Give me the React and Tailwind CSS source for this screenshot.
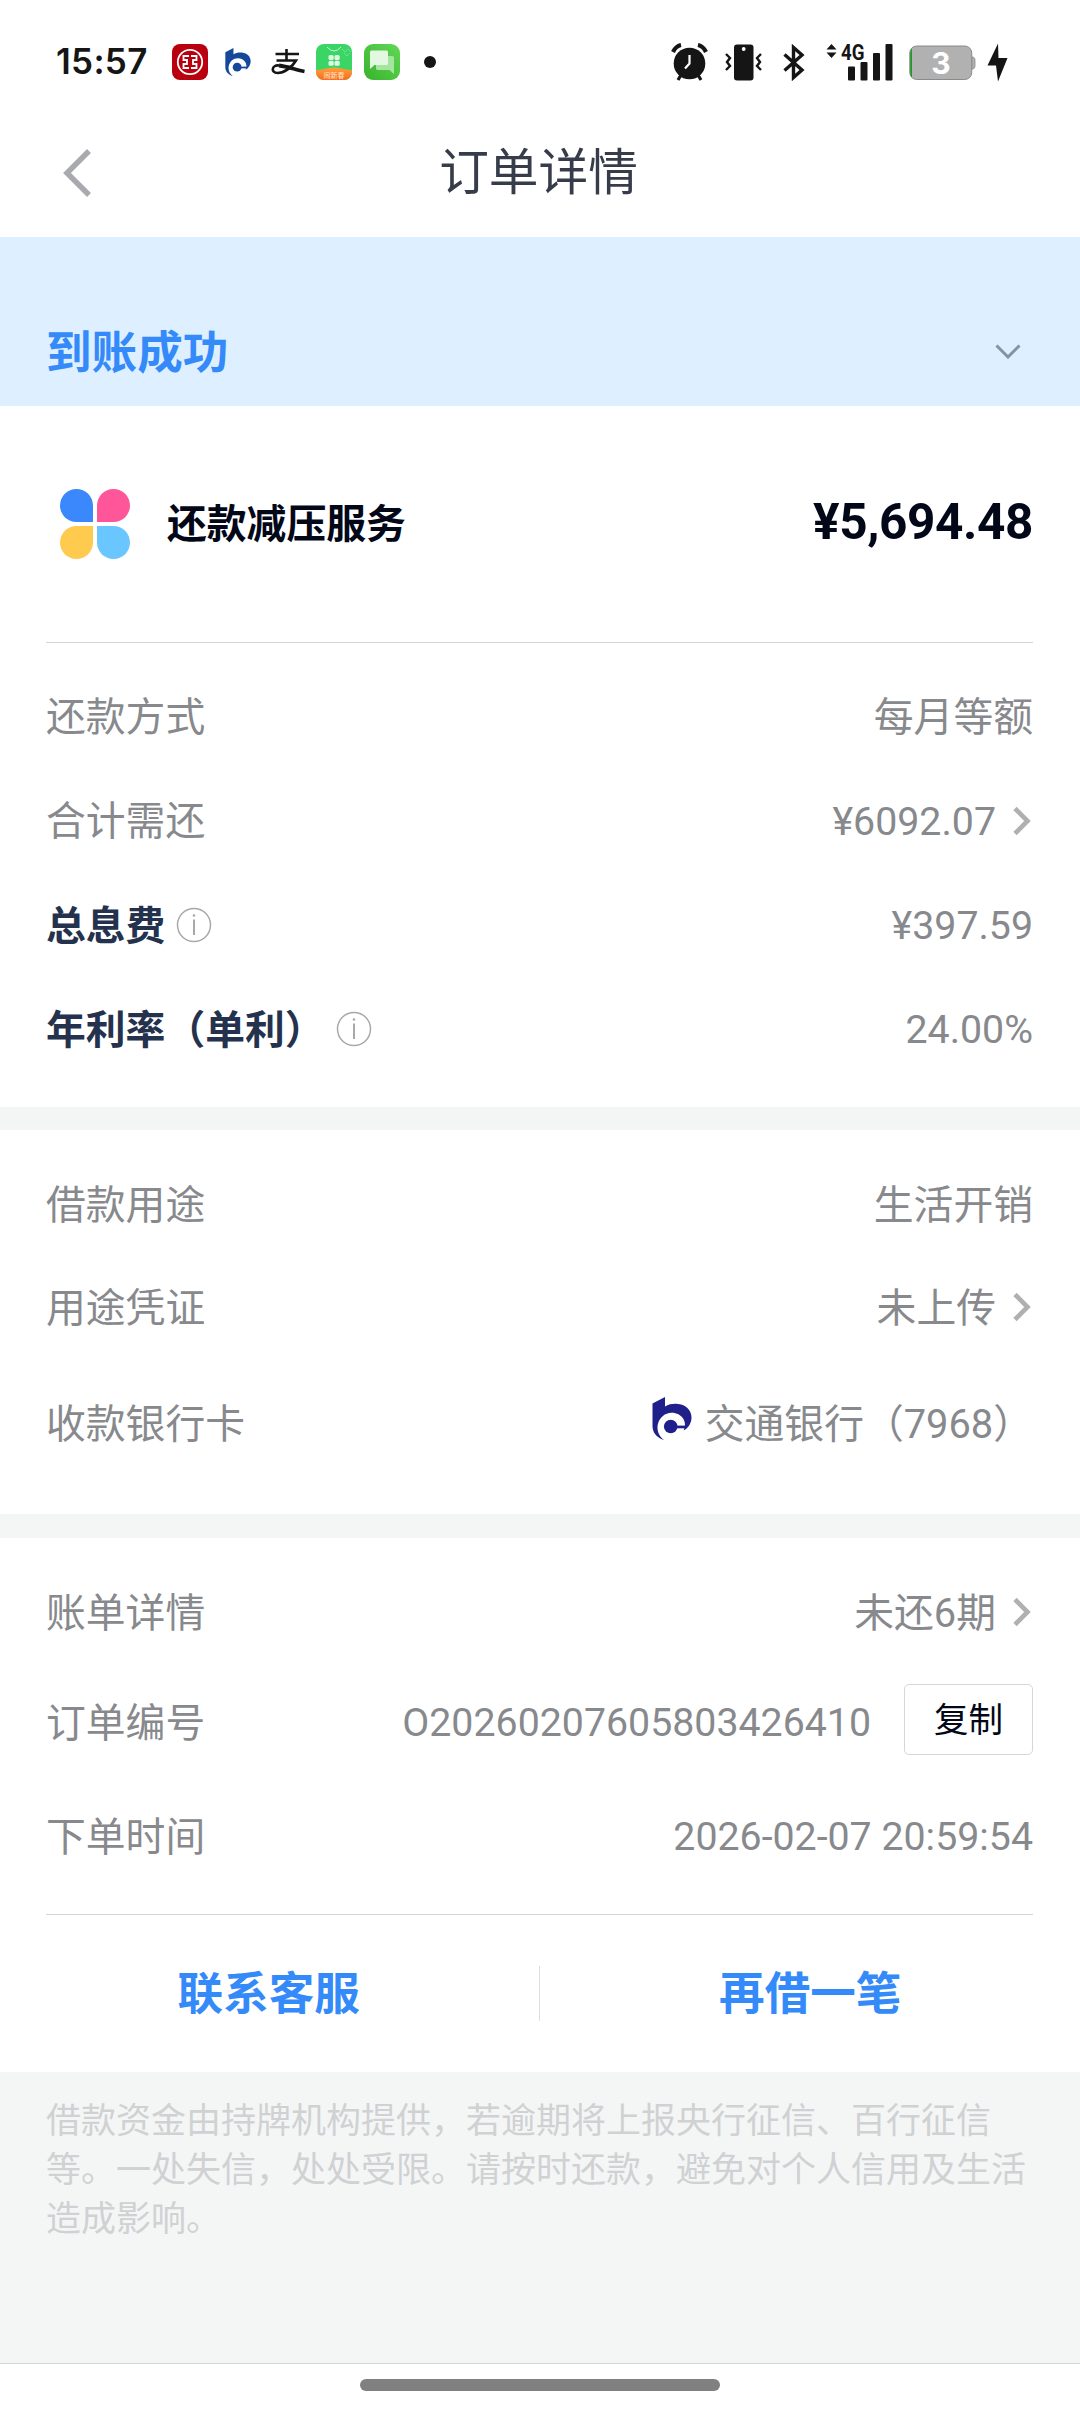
const CJK = "font-['Roboto','Noto_Sans_CJK_SC',sans-serif]";

function BankMark({ className, color }) {
  return (
    <svg className={className} viewBox="0 0 40 43" fill={color}>
      <path d="M0.500 6.500L13 0V9.500C17 7 22 6.500 26 7C35 8 39.500 14 39.500 20.500C39.500 26 36.500 31 31.500 33.500C36 25 30 15.700 19.500 15.700C6 16 0 34 12 43C4 40.500 0.500 35 0.500 29Z" />
      <circle cx="18.700" cy="29.500" r="6.800" />
      <path d="M24 28.600H34.500V31.300H24Z" />
    </svg>
  );
}

function IcbcIcon() {
  return (
    <svg className="h-9 w-9" viewBox="0 0 36 36">
      <rect width="36" height="36" rx="8" fill="#b8000f" />
      <circle cx="18" cy="18" r="12.2" fill="none" stroke="#fff" strokeWidth="1.8" />
      <path
        d="M17 12H11.500V16H15V20H11.500V24H17M19 12H24.500V16H21V20H24.500V24H19"
        fill="none"
        stroke="#fff"
        strokeWidth="1.800"
      />
    </svg>
  );
}

function ZhiIcon() {
  return (
    <svg className="h-[26px] w-[34px]" viewBox="0 0 34 26" fill="none" stroke="#151515" strokeWidth="2.6">
      <path d="M4.500 5H28M15.500 0V11.500M5.500 11.500H25C21 18.500 13 24 6.500 24C-0.500 24 0.500 15.500 8 16.500" />
      <path d="M8 16.500C17 17.500 25 21 33.500 22.500" strokeWidth="3.800" />
    </svg>
  );
}

function CloverAppIcon() {
  return (
    <svg className="h-9 w-9" viewBox="0 0 36 36">
      <defs>
        <clipPath id="clover-clip">
          <rect width="36" height="36" rx="8" />
        </clipPath>
        <linearGradient id="clover-orange" x1="0" y1="0" x2="0" y2="1">
          <stop offset="0" stopColor="#ffa13c" />
          <stop offset="1" stopColor="#fb6a1a" />
        </linearGradient>
      </defs>
      <g clipPath="url(#clover-clip)">
        <rect width="36" height="36" fill="#3ad564" />
        <path d="M11 3Q18 11 25 3" fill="none" stroke="#c9f7d5" strokeWidth="1" />
        <path d="M26 5L29 8L32 5L35 8M28 9L31 12L34 9" fill="none" stroke="#84e79d" strokeWidth="0.700" />
        <g fill="#dcf9e3">
          <rect x="12.500" y="11" width="5.200" height="5" rx="1.600" />
          <rect x="18.500" y="11" width="5.200" height="5" rx="1.600" />
          <rect x="12.500" y="16.800" width="5.200" height="5" rx="1.600" />
          <rect x="18.500" y="16.800" width="5.200" height="5" rx="1.600" />
        </g>
        <path d="M0 26Q4 26 8 25Q18 22 28 25Q32 26 36 26V36H0Z" fill="url(#clover-orange)" />
        <text x="18" y="33.5" textAnchor="middle" fontSize="7" fill="#ffe6cf" fontFamily="Noto Sans CJK SC">
          闹新春
        </text>
      </g>
    </svg>
  );
}

function MessagesIcon() {
  return (
    <svg className="h-9 w-9" viewBox="0 0 36 36">
      <defs>
        <linearGradient id="msg-green" x1="0" y1="1" x2="1" y2="0">
          <stop offset="0" stopColor="#38b22c" />
          <stop offset="1" stopColor="#62d856" />
        </linearGradient>
      </defs>
      <rect width="36" height="36" rx="9" fill="url(#msg-green)" />
      <path d="M14 12H28.5Q30 12 30 13.500V30L25.500 26H13.500Q12 26 12 24.500V14Z" fill="#a5e59f" />
      <path d="M7.500 6.500H22.500Q24 6.500 24 8V19.500Q24 21 22.500 21H10.500L6 25V8Q6 6.500 7.500 6.500Z" fill="#e3f8e0" />
    </svg>
  );
}

function AlarmIcon() {
  return (
    <svg className="h-[38px] w-[37px]" viewBox="0 0 37 38">
      <path d="M2 9Q5 3 10 2M35 9Q32 3 27 2" stroke="#151515" strokeWidth="4.200" fill="none" />
      <path d="M10 32L7 37M27 32L30 37" stroke="#151515" strokeWidth="3.200" />
      <circle cx="18.500" cy="20.500" r="15.800" fill="#151515" />
      <path d="M18.500 12V20.500L14 25.500" stroke="#fff" strokeWidth="2.200" fill="none" />
    </svg>
  );
}

function VibrateIcon() {
  return (
    <svg className="h-[37px] w-[37px]" viewBox="0 0 37 37">
      <rect x="9" y="0.500" width="19.500" height="36" rx="3" fill="#151515" />
      <circle cx="18.700" cy="5" r="1.900" fill="#fff" />
      <path
        d="M1 10L5 14L2 18L5 22L1 26M36 10L32 14L35 18L32 22L36 26"
        stroke="#151515"
        strokeWidth="2.400"
        fill="none"
      />
    </svg>
  );
}

function BluetoothIcon() {
  return (
    <svg className="h-[37px] w-[22px]" viewBox="0 0 22 37" fill="none" stroke="#151515" strokeWidth="3.400">
      <path d="M1.500 10.500L19 26L10.500 33.500V3.500L19 11L1.500 26.500" />
    </svg>
  );
}

function SignalIcon() {
  return (
    <svg className="h-[38px] w-[67px] overflow-visible" viewBox="0 0 67 38" fill="#151515">
      <path d="M0.500 6.500L5.500 1L10.500 6.500ZM0.500 9.500H10.500L5.500 15Z" />
      <text x="15" y="16.500" fontFamily="Roboto" fontWeight="700" fontSize="22" textLength="23.500" lengthAdjust="spacingAndGlyphs">
        4G
      </text>
      <rect x="22" y="23.500" width="7" height="14" rx="1" />
      <rect x="34.500" y="19" width="7" height="18.500" rx="1" />
      <rect x="47" y="10" width="7" height="27.500" rx="1" />
      <rect x="59.500" y="1" width="7" height="36.500" rx="1" />
    </svg>
  );
}

function BatteryIcon() {
  return (
    <svg className="h-[36px] w-[67px]" viewBox="0 0 67 36">
      <rect x="0.750" y="1" width="62" height="33.500" rx="7" fill="#b1b1b1" stroke="#8a8a8a" strokeWidth="1" />
      <path d="M63 12H64Q66 12.500 66 15V21Q66 23.500 64 24H63Z" fill="#b1b1b1" stroke="#8a8a8a" strokeWidth="0.800" />
      <path d="M3 3.500Q1.200 5 1.200 8V28Q1.200 31 3 32.500Z" fill="#1f9a2a" />
      <text x="32" y="29" textAnchor="middle" fontFamily="Inter" fontWeight="700" fontSize="30" fill="#fff">
        3
      </text>
    </svg>
  );
}

function StatusBar() {
  return (
    <div className="flex h-[124px] items-center pl-[56px] pr-[72px]">
      <span className="w-[92px] whitespace-nowrap pb-[1px] font-['Inter'] text-[35px] font-semibold leading-none tracking-[0.3px] text-[#151515]">
        15:57
      </span>
      <div className="ml-6 flex items-center">
        <IcbcIcon />
        <BankMark className="ml-[17px] h-[28px] w-[26px]" color="#15489b" />
        <div className="ml-[20px]">
          <ZhiIcon />
        </div>
        <div className="ml-[11px]">
          <CloverAppIcon />
        </div>
        <div className="ml-3">
          <MessagesIcon />
        </div>
        <div className="ml-6 h-3 w-3 rounded-full bg-[#151515]" />
      </div>
      <div className="ml-auto flex items-center">
        <AlarmIcon />
        <div className="ml-[17px]">
          <VibrateIcon />
        </div>
        <div className="ml-[21px]">
          <BluetoothIcon />
        </div>
        <div className="ml-[21px]">
          <SignalIcon />
        </div>
        <div className="ml-[16px] mt-[2px]">
          <BatteryIcon />
        </div>
        <svg className="ml-[11px] h-[39px] w-[21px]" viewBox="0 0 21 39" fill="#151515">
          <path d="M11 0.500L0.500 22.500H9L11 38.500L20.500 15H11.500Z" />
        </svg>
      </div>
    </div>
  );
}

function ChevronRight() {
  return (
    <svg className="ml-[17px] mr-[2px] h-[30px] w-[18px]" viewBox="0 0 18 30" fill="none" stroke="#b0b0b2" strokeWidth="4.600">
      <path d="M2 2.500L14.500 15L2 27.500" />
    </svg>
  );
}

function InfoIcon() {
  return (
    <svg className="h-[36px] w-[36px]" viewBox="0 0 36 36">
      <circle cx="18" cy="18" r="16.500" fill="none" stroke="#a9a9ab" strokeWidth="1.500" />
      <circle cx="18" cy="8.500" r="1.300" fill="#a9a9ab" />
      <path d="M18 12.500V28" stroke="#a9a9ab" strokeWidth="2" />
    </svg>
  );
}

function Row({ className, label, strong, info, children }) {
  return (
    <div className={`flex items-center justify-between ${className}`}>
      <div className="flex items-center">
        <span className={strong ? "pt-[3px] font-bold text-[#25324d]" : "pt-[2px]"}>{label}</span>
        {info && (
          <span className={info}>
            <InfoIcon />
          </span>
        )}
      </div>
      <div className="flex items-center">{children}</div>
    </div>
  );
}

function Num({ children }) {
  return <span className="pt-[3px] text-[39.3px]">{children}</span>;
}

function Han({ children }) {
  return <span className="pt-[2px]">{children}</span>;
}

export default function App() {
  return (
    <div className={`flex h-[2412px] w-[1080px] flex-col overflow-hidden bg-white text-[39.800px] leading-none text-[#87898d] ${CJK}`}>
      <StatusBar />

      <header className="flex h-[113px] items-center px-[62px] pb-[16px]">
        <svg className="h-[48px] w-[30px]" viewBox="0 0 30 48" fill="none" stroke="#a9aaad" strokeWidth="5.500">
          <path d="M27 2L5 24L27 46" />
        </svg>
        <h1 className="flex-1 pr-[33px] pt-[2px] text-center text-[49.700px] text-[#363c4a]">订单详情</h1>
      </header>

      <section className="flex h-[169px] items-end justify-between bg-[#deefff] pb-[29px] pl-[46px] pr-[59px]">
        <h2 className="text-[45.600px] font-bold text-[#348af8]">到账成功</h2>
        <svg className="mb-[18px] h-[15px] w-[26px]" viewBox="0 0 26 15" fill="none" stroke="#85929f" strokeWidth="3">
          <path d="M1.500 1.500L13 13L24.500 1.500" />
        </svg>
      </section>

      <section className="h-[701px] pl-[46px] pr-[47px]">
        <div className="flex h-[237px] items-center border-b border-[#d3d5d7] pl-[14px]">
          <div className="grid w-[70px] grid-cols-2 gap-[4px]">
            <div className="h-[33px] rounded-full rounded-br-[5px] bg-[#3a88fc]" />
            <div className="h-[33px] rounded-full rounded-bl-[5px] bg-[#ff5599]" />
            <div className="h-[33px] rounded-full rounded-tr-[5px] bg-[#ffcb4f]" />
            <div className="h-[33px] rounded-full rounded-tl-[5px] bg-[#69c6ff]" />
          </div>
          <span className="ml-[37px] pt-[2px] font-bold text-[#020817]">还款减压服务</span>
          <span className="ml-auto pb-[2px] text-[49.500px] font-bold tracking-[-0.4px] text-[#020817]">¥5,694.48</span>
        </div>
        <Row className="mt-[22px] h-[104px]" label="还款方式">
          <Han>每月等额</Han>
        </Row>
        <Row className="h-[104px]" label="合计需还">
          <Num>¥6092.07</Num>
          <ChevronRight />
        </Row>
        <Row className="h-[104px]" label="总息费" strong info="ml-[11px]">
          <Num>¥397.59</Num>
        </Row>
        <Row className="h-[104px]" label="年利率（单利）" strong info="ml-[11px]">
          <Num>24.00%</Num>
        </Row>
      </section>

      <div className="h-[23px] bg-[#f4f6f6]" />

      <section className="h-[384px] pl-[46px] pr-[47px] pt-[23px]">
        <Row className="h-[103px]" label="借款用途">
          <Han>生活开销</Han>
        </Row>
        <Row className="h-[103px]" label="用途凭证">
          <Han>未上传</Han>
          <ChevronRight />
        </Row>
        <Row className="h-[130px]" label="收款银行卡">
          <BankMark className="mb-[11px] mr-[13px] h-[43px] w-[40px]" color="#20208a" />
          <Han>交通银行（7968）</Han>
        </Row>
      </section>

      <div className="h-[24px] bg-[#f4f6f6]" />

      <section className="h-[534px] pl-[46px] pr-[47px] pt-[22px]">
        <Row className="h-[105px]" label="账单详情">
          <Han>未还6期</Han>
          <ChevronRight />
        </Row>
        <Row className="h-[115px]" label="订单编号">
          <Num>O20260207605803426410</Num>
          <button className="mb-[7px] ml-[33px] h-[71px] w-[129px] rounded-[5px] border border-[#d5d6da] pt-[2px] text-[34.500px] text-[#020817]">
            复制
          </button>
        </Row>
        <Row className="h-[113px]" label="下单时间">
          <Num>2026-02-07 20:59:54</Num>
        </Row>
        <div className="mt-[21px] flex h-[158px] items-center border-t border-[#d3d5d7]">
          <button className="flex-1 pr-[47px] pt-[3px] text-center text-[45.600px] font-bold text-[#348af8]">联系客服</button>
          <div className="h-[55px] w-px bg-[#dcdddf]" />
          <button className="flex-1 pl-[48px] pt-[3px] text-center text-[45.600px] font-bold text-[#348af8]">再借一笔</button>
        </div>
      </section>

      <footer className="flex-1 bg-[#f4f6f6] px-[46px] pt-[25px] text-[35px] leading-[49px] text-[#d0d1d3]">
        <p>
          借款资金由持牌机构提供，若逾期将上报央行征信、百行征信
          <br />
          等。一处失信，处处受限。请按时还款，避免对个人信用及生活
          <br />
          造成影响。
        </p>
      </footer>

      <div className="flex h-[49px] justify-center border-t border-[#d3d5d6] bg-white pt-[15px]">
        <div className="h-[12px] w-[360px] rounded-full bg-[#808080]" />
      </div>
    </div>
  );
}
